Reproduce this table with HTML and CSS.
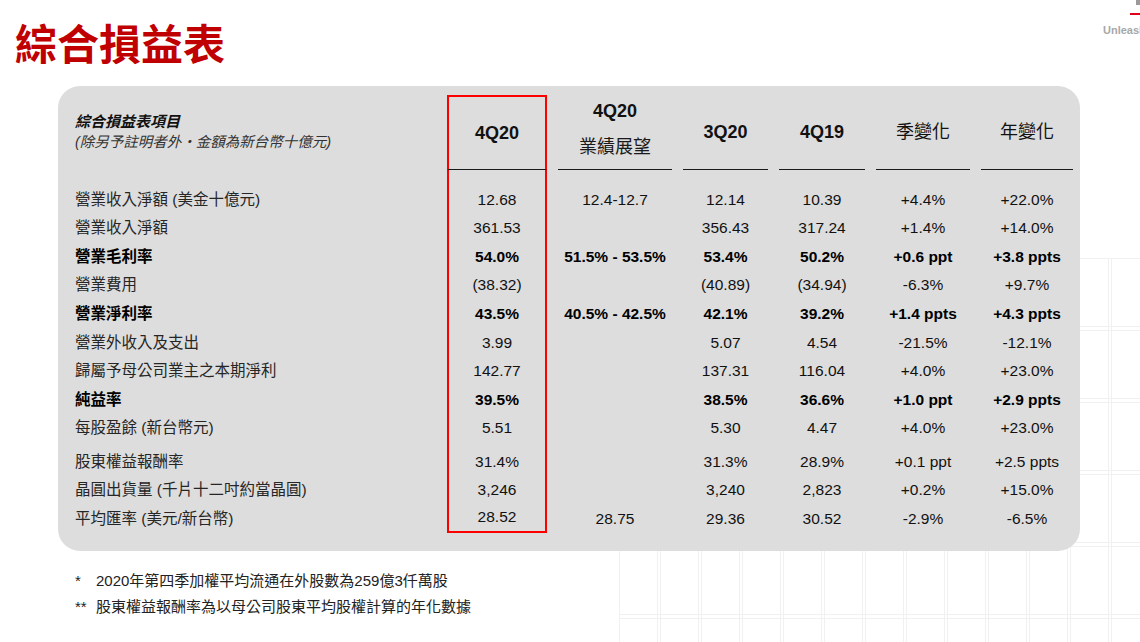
FILE: index.html
```html
<!DOCTYPE html>
<html lang="zh-Hant">
<head>
<meta charset="utf-8">
<title>綜合損益表</title>
<link rel="stylesheet" href="styles.css">
</head>
<body>
<div class="bggrid"></div>
<header class="top">
  <h1 class="title">綜合損益表</h1>
  <div class="brand">
    <div class="mark"></div>
    <div class="redline"></div>
    <div class="tagline">Unleash</div>
  </div>
</header>

<section class="panel">
  <div class="grid">
    <div class="row head">
      <div class="cell label">
        <div class="h-title">綜合損益表項目</div>
        <div class="h-sub">(除另予註明者外・金額為新台幣十億元)</div>
      </div>
      <div class="cell hl hl-top"><b>4Q20</b></div>
      <div class="cell two"><b>4Q20</b><span>業績展望</span></div>
      <div class="cell"><b>3Q20</b></div>
      <div class="cell"><b>4Q19</b></div>
      <div class="cell">季變化</div>
      <div class="cell">年變化</div>
    </div>

    <div class="row first">
      <div class="cell label">營業收入淨額 (美金十億元)</div>
      <div class="cell hl">12.68</div>
      <div class="cell">12.4-12.7</div>
      <div class="cell">12.14</div>
      <div class="cell">10.39</div>
      <div class="cell">+4.4%</div>
      <div class="cell">+22.0%</div>
    </div>
    <div class="row">
      <div class="cell label">營業收入淨額</div>
      <div class="cell hl">361.53</div>
      <div class="cell"></div>
      <div class="cell">356.43</div>
      <div class="cell">317.24</div>
      <div class="cell">+1.4%</div>
      <div class="cell">+14.0%</div>
    </div>
    <div class="row b">
      <div class="cell label">營業毛利率</div>
      <div class="cell hl">54.0%</div>
      <div class="cell">51.5% - 53.5%</div>
      <div class="cell">53.4%</div>
      <div class="cell">50.2%</div>
      <div class="cell">+0.6 ppt</div>
      <div class="cell">+3.8 ppts</div>
    </div>
    <div class="row">
      <div class="cell label">營業費用</div>
      <div class="cell hl">(38.32)</div>
      <div class="cell"></div>
      <div class="cell">(40.89)</div>
      <div class="cell">(34.94)</div>
      <div class="cell">-6.3%</div>
      <div class="cell">+9.7%</div>
    </div>
    <div class="row b">
      <div class="cell label">營業淨利率</div>
      <div class="cell hl">43.5%</div>
      <div class="cell">40.5% - 42.5%</div>
      <div class="cell">42.1%</div>
      <div class="cell">39.2%</div>
      <div class="cell">+1.4 ppts</div>
      <div class="cell">+4.3 ppts</div>
    </div>
    <div class="row">
      <div class="cell label">營業外收入及支出</div>
      <div class="cell hl">3.99</div>
      <div class="cell"></div>
      <div class="cell">5.07</div>
      <div class="cell">4.54</div>
      <div class="cell">-21.5%</div>
      <div class="cell">-12.1%</div>
    </div>
    <div class="row">
      <div class="cell label">歸屬予母公司業主之本期淨利</div>
      <div class="cell hl">142.77</div>
      <div class="cell"></div>
      <div class="cell">137.31</div>
      <div class="cell">116.04</div>
      <div class="cell">+4.0%</div>
      <div class="cell">+23.0%</div>
    </div>
    <div class="row b">
      <div class="cell label">純益率</div>
      <div class="cell hl">39.5%</div>
      <div class="cell"></div>
      <div class="cell">38.5%</div>
      <div class="cell">36.6%</div>
      <div class="cell">+1.0 ppt</div>
      <div class="cell">+2.9 ppts</div>
    </div>
    <div class="row">
      <div class="cell label">每股盈餘 (新台幣元)</div>
      <div class="cell hl">5.51</div>
      <div class="cell"></div>
      <div class="cell">5.30</div>
      <div class="cell">4.47</div>
      <div class="cell">+4.0%</div>
      <div class="cell">+23.0%</div>
    </div>
    <div class="row spaced">
      <div class="cell label">股東權益報酬率</div>
      <div class="cell hl">31.4%</div>
      <div class="cell"></div>
      <div class="cell">31.3%</div>
      <div class="cell">28.9%</div>
      <div class="cell">+0.1 ppt</div>
      <div class="cell">+2.5 ppts</div>
    </div>
    <div class="row">
      <div class="cell label">晶圓出貨量 (千片十二吋約當晶圓)</div>
      <div class="cell hl">3,246</div>
      <div class="cell"></div>
      <div class="cell">3,240</div>
      <div class="cell">2,823</div>
      <div class="cell">+0.2%</div>
      <div class="cell">+15.0%</div>
    </div>
    <div class="row last">
      <div class="cell label">平均匯率 (美元/新台幣)</div>
      <div class="cell hl hl-bottom">28.52</div>
      <div class="cell">28.75</div>
      <div class="cell">29.36</div>
      <div class="cell">30.52</div>
      <div class="cell">-2.9%</div>
      <div class="cell">-6.5%</div>
    </div>
  </div>
</section>

<section class="notes">
  <div class="note"><span class="mk">*</span><span>2020年第四季加權平均流通在外股數為259億3仟萬股</span></div>
  <div class="note"><span class="mk">**</span><span>股東權益報酬率為以母公司股東平均股權計算的年化數據</span></div>
</section>
</body>
</html>
```

FILE: styles.css
```css
html, body {
  margin: 0;
  padding: 0;
}

body {
  width: 1140px;
  height: 642px;
  overflow: hidden;
  background: #ffffff;
  font-family: "Liberation Sans", "Noto Sans CJK TC", sans-serif;
  color: #1a1a1a;
  position: relative;
}

.bggrid {
  position: absolute;
  left: 619px;
  top: 258px;
  right: 0;
  bottom: 0;
  z-index: 0;
  background-image:
    repeating-linear-gradient(90deg, #f3f1f0 0 1px, transparent 1px 38px, #f3f1f0 38px 39px, transparent 39px 41px),
    repeating-linear-gradient(180deg, #f3f1f0 0 1px, transparent 1px 68px, #f3f1f0 68px 69px, transparent 69px 72px);
}

.top {
  position: relative;
  z-index: 1;
  display: flex;
  box-sizing: border-box;
  height: 86px;
  padding: 20px 0 0 15px;
}

.title {
  margin: 0;
  font-family: "Noto Sans CJK TC", sans-serif;
  font-size: 42px;
  line-height: 44px;
  font-weight: bold;
  color: #c00000;
  letter-spacing: 0;
}

.brand {
  margin-left: auto;
  margin-top: -20px;
  width: 37px;
  align-self: flex-start;
  white-space: nowrap;
}

.mark {
  width: 4px;
  height: 5px;
  margin-left: 33px;
  background: #9a9a9a;
}

.redline {
  width: 10px;
  height: 2px;
  margin-left: 27px;
  margin-top: 8px;
  background: #e3001b;
}

.tagline {
  margin-top: 8px;
  font-size: 11px;
  line-height: 14px;
  font-weight: bold;
  color: #a8a8a8;
}

.panel {
  position: relative;
  z-index: 1;
  margin-left: 58px;
  width: 1022px;
  box-sizing: border-box;
  padding: 9px 7px 18px 17px;
  background: #dddddd;
  border-radius: 22px;
}

.grid {
  display: grid;
  grid-template-columns: 361px 100px 114px 85px 86px 94px 92px;
  column-gap: 11px;
}

.row {
  display: contents;
}

.cell {
  box-sizing: border-box;
  text-align: center;
  font-size: 15.5px;
  line-height: 28.6px;
  color: #111111;
  white-space: nowrap;
}

.label {
  text-align: left;
  color: #262626;
}

.b .cell {
  font-weight: bold;
  color: #000000;
}

.hl {
  border-left: 2px solid #ff0000;
  border-right: 2px solid #ff0000;
}

.hl-top {
  border-top: 2px solid #ff0000;
}

.hl-bottom {
  border-bottom: 2px solid #ff0000;
}

.head .cell {
  height: 75px;
  display: flex;
  flex-direction: column;
  justify-content: center;
  align-items: center;
  font-size: 18px;
  line-height: 24px;
  color: #111111;
  border-bottom: 1px solid #1a1a1a;
}

.head .label {
  align-items: flex-start;
  border-bottom: none;
  padding-bottom: 2px;
}

.head .two {
  line-height: 36px;
  padding-bottom: 6px;
}

.head .two span {
  color: #1a1a1a;
}

.h-title {
  font-size: 15px;
  line-height: 20px;
  font-weight: bold;
  font-style: italic;
  color: #111111;
}

.h-sub {
  font-size: 14.5px;
  line-height: 20px;
  font-style: italic;
  color: #333333;
}

.first .cell {
  padding-top: 15.7px;
  line-height: 28.6px;
}

.spaced .cell {
  padding-top: 4.6px;
}

.last .cell {
  line-height: 28.6px;
}

.last .hl-bottom {
  line-height: 24.1px;
}

.notes {
  position: relative;
  z-index: 1;
  margin-top: 17px;
  padding-left: 75px;
}

.note {
  display: flex;
  font-size: 15px;
  line-height: 26px;
  color: #222222;
}

.mk {
  width: 21px;
  flex: none;
}
```
